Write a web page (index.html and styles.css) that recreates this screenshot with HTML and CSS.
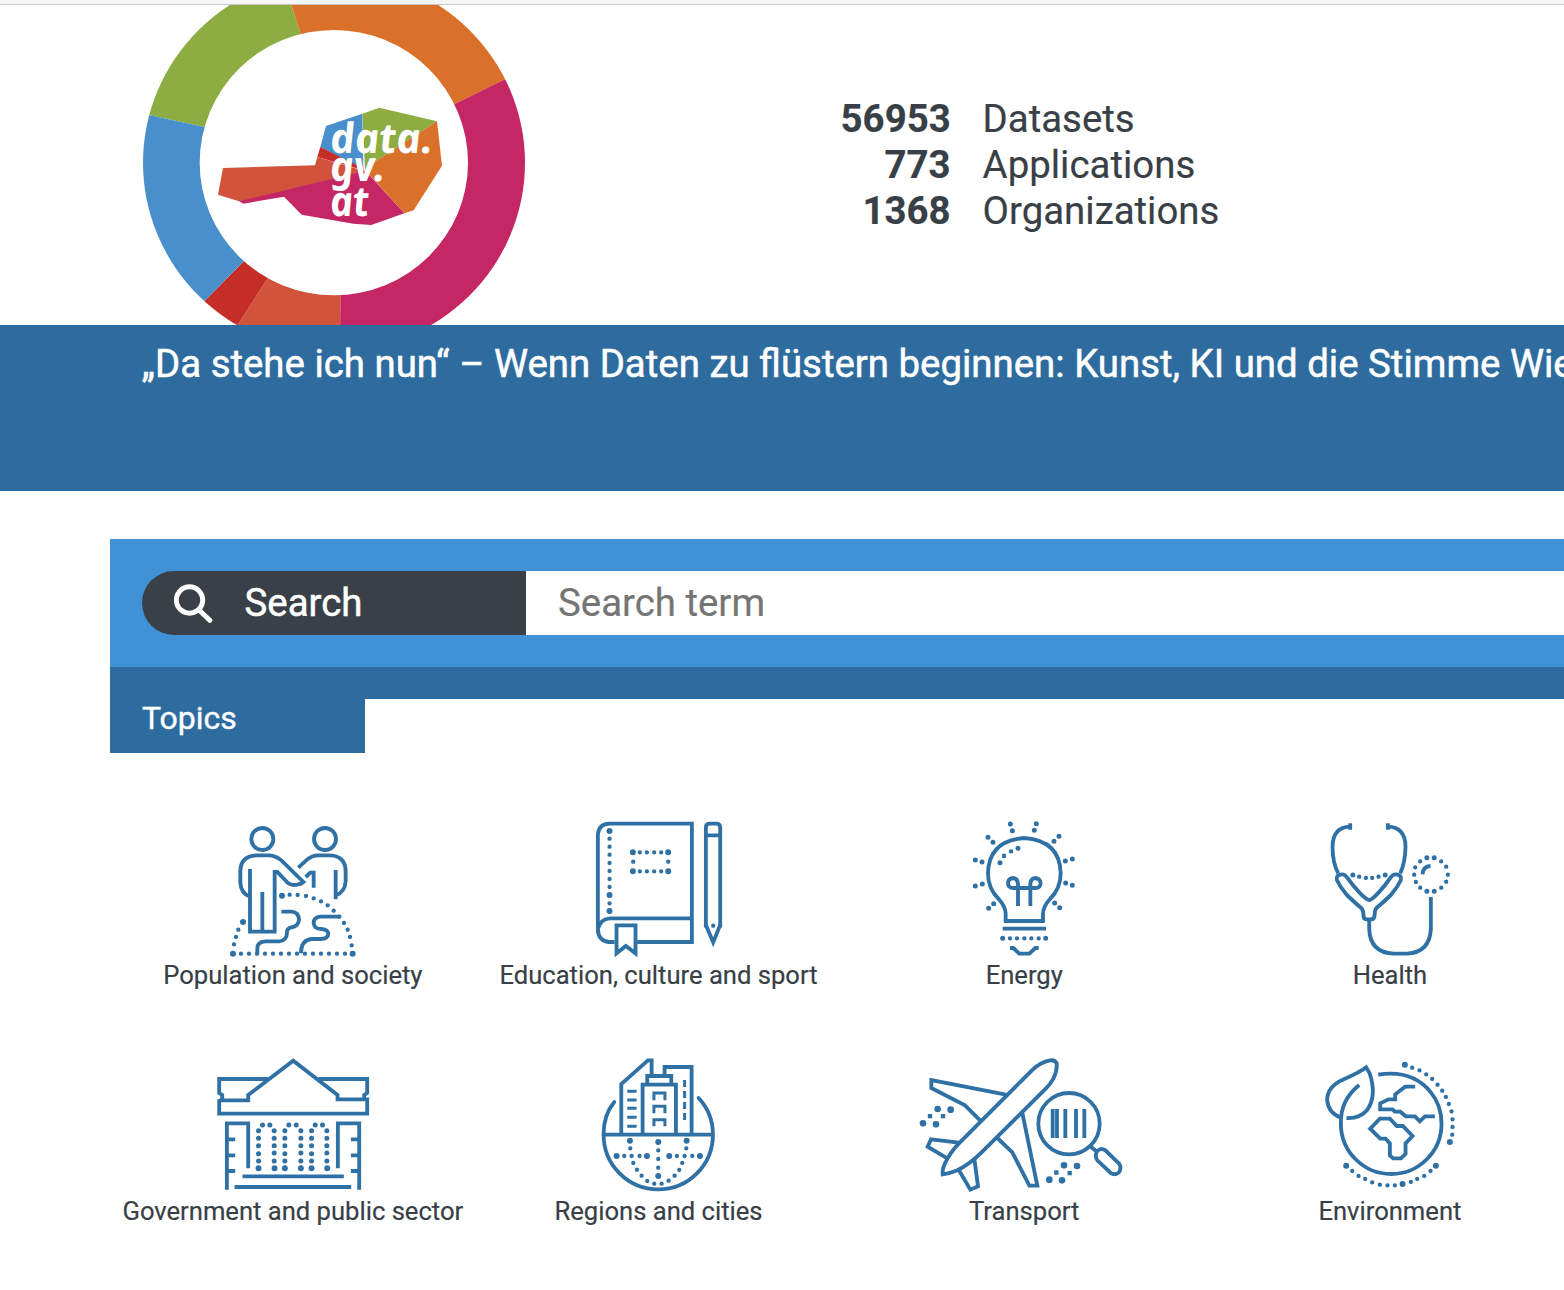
FILE: index.html
```html
<!DOCTYPE html>
<html lang="en">
<head>
<meta charset="utf-8">
<title>data.gv.at</title>
<link rel="stylesheet" href="styles.css">
</head>
<body>
<div class="topline"></div>
<header class="header">
  <svg class="logo" viewBox="39 15 1152 960" role="img" aria-label="data.gv.at">
    <clipPath id="ring"><ellipse cx="612" cy="488.4" rx="573" ry="565"/></clipPath>
    <g clip-path="url(#ring)">
      <path fill="#8dad42" d="M612 488 512 102 443 -115H-100V311L223 381Z"/>
      <path fill="#da712b" d="M612 488 512 102 443 -115H1300V151L972 313Z"/>
      <path fill="#c42764" d="M612 488 972 313 1300 151V1200H629L631 885Z"/>
      <path fill="#d1533c" d="M612 488 631 885 629 1200H178L413 835Z"/>
      <path fill="#c52d27" d="M612 488 413 835 178 1200H-68L341 784Z"/>
      <path fill="#488fcc" d="M612 488 341 784 -68 1200H-200V289L223 381Z"/>
    </g>
    <ellipse cx="611.5" cy="488" rx="402.5" ry="398" fill="#fff"/>
    <path fill="#488fcc" d="M697 341 588 378 571 441 700 508Z"/>
    <path fill="#8dad42" d="M697 341 748 323 921 364 735 485 705 510Z"/>
    <path fill="#da712b" d="M921 364 936 497 851 631 823 640 705 510 735 485Z"/>
    <path fill="#c52d27" d="M571 441 562 471 705 512 690 500Z"/>
    <path fill="#d1533c" d="M562 471 555 496 279 504 264 584 332 605 706 514Z"/>
    <path fill="#c42764" d="M706 512 823 640 724 675 670 671 515 644 462 590 340 611 328 604Z"/>
    <g class="logo-text">
      <text transform="translate(604 460) skewX(6)" textLength="308" lengthAdjust="spacingAndGlyphs">data.</text>
      <text transform="translate(604 543) skewX(6)" textLength="164" lengthAdjust="spacingAndGlyphs">gv.</text>
      <text transform="translate(604 649) skewX(6)" textLength="117" lengthAdjust="spacingAndGlyphs">at</text>
    </g>
  </svg>
  <dl class="stats">
    <dt>56953</dt><dd>Datasets</dd>
    <dt>773</dt><dd>Applications</dd>
    <dt>1368</dt><dd>Organizations</dd>
  </dl>
</header>
<section class="banner">„Da stehe ich nun“ – Wenn Daten zu flüstern beginnen: Kunst, KI und die Stimme Wiens</section>
<main class="main">
  <form class="search">
    <button class="search-button" type="button">
      <svg class="search-icon" viewBox="0 0 39 39"><circle cx="15.5" cy="16" r="13.2"/><path d="M25 26 35.8 36.3"/></svg>
      Search
    </button>
    <input class="search-input" type="text" placeholder="Search term">
  </form>
  <div class="strip"></div>
  <h2 class="tab">Topics</h2>
  <div class="topics">
    <a class="topic">
      <svg viewBox="-81 0 660 435">
        <circle cx="157" cy="72" r="33"/><circle cx="345" cy="72" r="33"/>
        <path d="M120 162V350H194V171H202L234 204Q248 215 273 206L280 201 215 137Q197 121 175 121H140Q91 123 91 170V203Q93 236 120 245M157 231V350"/>
        <path d="M265 158 291 134Q306 121 324 121H360Q407 123 407 170V198Q405 232 377 241M377 165V253M287 186 301 173H311V218"/>
        <path d="M214 290H245Q266 292 267 314 266 334 244 337 229 340 231 354 230 377 208 379H166Q142 380 142 400V415M389 305H331Q311 307 311 324 312 342 334 342 354 344 355 356 354 372 332 372H305Q273 375 273 415"/>
        <path class="dot small" d="M85 344h0M78 366h0M72 388h0M93 416h0M117 416h0M141 416h0M165 416h0M189 416h0M213 416h0M237 416h0M261 416h0M285 416h0M309 416h0M333 416h0M357 416h0M381 416h0M405 416h0M425 391h0M420 366h0M413 344h0M402 324h0M388 305h0M371 287h0M353 271h0M333 259h0M311 250h0M288 243h0M263 240h0M239 239h0"/>
        <path class="dot big" d="M99 321h0M69 416h0M428 416h0M216 242h0"/>
      </svg>
      <span>Population and society</span>
    </a>
    <a class="topic">
      <svg viewBox="-92.6 15 660 435">
        <path d="M104 396H87Q55 392 54 358V75Q56 42 88 41H336V396H172M54 358Q62 326 90 325H336"/>
        <path d="M110 346H167V430L138 408 110 430Z"/>
        <path d="M378 345V53Q378 41 390 41H409Q421 41 421 53V345L400 397ZM378 76H421"/>
        <path class="dot small" d="M89 86h0M89 110h0M89 134h0M89 159h0M89 183h0M89 207h0M89 231h0M89 280h0M180 127h0M201 127h0M223 127h0M244 127h0M180 184h0M201 184h0M223 184h0M244 184h0M160 155h0M265 155h0M378 347h0M400 347h0M421 347h0"/>
        <path class="dot big" d="M89 63h0M89 255h0M89 303h0M159 127h0M265 127h0M159 184h0M265 184h0"/>
      </svg>
      <span>Education, culture and sport</span>
    </a>
    <a class="topic">
      <svg viewBox="-138 15 660 435">
        <path d="M137 333V312Q137 290 116 267 84 236 84 190 86 92 193 84 300 92 302 190 302 236 270 267 249 290 249 312V333ZM128 356H258M150 414H160L178 431H208L226 414H236"/>
        <path d="M174 288V222Q173 205 159 204 144 206 144 220 145 234 160 234H226Q241 234 242 220 241 206 226 204 212 205 211 222V288"/>
        <path class="dot" d="M151 42h0M157 62h0M229 41h0M223 61h0M84 82h0M99 97h0M297 79h0M282 94h0M46 150h0M66 156h0M337 147h0M316 153h0M46 228h0M67 222h0M317 219h0M337 226h0M101 281h0M86 295h0M284 279h0M299 293h0M174 115h0M120 158h0M128 385h0M257 385h0"/>
        <path class="dot small" d="M150 385h0M171 385h0M193 385h0M214 385h0M236 385h0"/>
        <path d="M147 124H159M132 131V144"/>
      </svg>
      <span>Energy</span>
    </a>
    <a class="topic">
      <svg viewBox="-90.6 15 660 435">
        <path d="M120 50Q68 51 67 110 67 158 84 190M233 50Q285 51 286 110 285 158 270 190M120 40V59M233 40V59"/>
        <path d="M177 270Q184 270 203 250 226 226 241 203 248 192 258 193 275 195 272 210 262 232 242 255 218 278 198 295 193 302 193 318 191 328 183 328H169Q160 327 160 318 160 302 154 295 134 278 110 255 90 232 80 210 77 195 94 193 104 192 111 203 127 226 150 250 170 270 177 270Z"/>
        <path d="M177 330V356Q179 428 250 431H290Q359 428 362 356V261M337 193Q338 169 361 168"/>
        <path class="dot small" d="M147 200h0M167 204h0M186 204h0M205 200h0M393 154h0M408 170h0M413 194h0M408 215h0M393 233h0M330 233h0M317 216h0M312 194h0M315 172h0M330 154h0"/>
        <path class="dot" d="M128 195h0M225 195h0M350 143h0M372 143h0M372 244h0M350 244h0"/>
      </svg>
      <span>Health</span>
    </a>
    <a class="topic">
      <svg viewBox="-66.6 3 660 435">
        <path d="M188 87H42V129L51 135V148M42 148V191H486V148H397V135L264 32 129 135V151H42M340 87H486V129L477 135V148"/>
        <path d="M65 419V220H129V355M65 268H90M65 316H90M65 363H90M462 419V220H398V355M462 268H437M462 316H437M462 363H437M112 379H416M88 411H438"/>
        <path class="dot" d="M172 225h0M194 225h0M160 242h0M207 242h0M160 265h0M207 265h0M160 287h0M207 287h0M160 311h0M207 309h0M160 333h0M207 333h0M251 225h0M273 225h0M239 242h0M287 242h0M239 265h0M287 265h0M239 287h0M287 287h0M239 311h0M287 309h0M239 333h0M287 333h0M330 225h0M352 225h0M319 242h0M365 242h0M319 265h0M365 265h0M319 287h0M365 287h0M319 311h0M365 309h0M319 333h0M365 333h0"/>
        <path class="dot big" d="M160 355h0M208 355h0M239 355h0M287 355h0M319 355h0M366 355h0"/>
      </svg>
      <span>Government and public sector</span>
    </a>
    <a class="topic">
      <svg viewBox="-122.8 3 660 435">
        <path d="M73 156Q40 196 41 254A164 164 0 0 0 369 254Q369 190 326 144M41 254H369" stroke-linecap="round"/>
        <path d="M94 254V102L174 31H185V76M224 72V51H305V254M158 254V104H258V254M172 104V78H244V104"/>
        <path class="thin" d="M112 124H140M112 150H140M112 175H140M112 202H140M112 229H140M284 90V111M284 123V144M284 156V177M284 189V210M192 151V129H225V151M192 190V169H225V190M192 229V209H225V229"/>
        <path class="dot small" d="M121 295h0M125 318h0M130 339h0M141 359h0M155 377h0M172 393h0M193 401h0M215 401h0M236 392h0M254 377h0M268 360h0M277 339h0M284 318h0M289 295h0M205 301h0M205 327h0M205 353h0M103 318h0M149 318h0M261 318h0M307 318h0"/>
        <path class="dot big" d="M120 272h0M290 272h0M205 276h0M80 318h0M171 318h0M238 318h0M330 318h0M205 378h0"/>
      </svg>
      <span>Regions and cities</span>
    </a>
    <a class="topic">
      <svg viewBox="12 3 660 435">
        <path d="M98 373Q96 360 104 342 120 307 149 278L368 59Q392 36 420 31 435 29 440 40 442 62 430 86 421 103 408 115L217 305Q179 343 142 361 119 371 98 373Z"/>
        <path d="M288 134 64 90V114L165 166 211 212M336 184 382 407H358L307 307 259 261M146 278 63 268 53 290 112 325M193 326 204 409 181 419 147 361"/>
        <circle cx="477" cy="221" r="92"/>
        <path d="M540 288 558 303M562 303Q573 292 586 301L628 342Q635 354 627 367 616 377 602 369L562 331Q553 317 562 303Z"/>
        <path d="M428 177V264M441 177V264M466 177V264M498 177V264M523 177V264"/>
        <path class="square" d="M60 192V205M99 192V205M439 361V374M479 363V376"/>
        <path class="dot huge" d="M83 177h0M122 179h0M39 220h0M78 223h0M462 346h0M501 348h0M418 389h0M456 391h0"/>
      </svg>
      <span>Transport</span>
    </a>
    <a class="topic">
      <svg viewBox="-90.6 3 660 435">
        <path d="M204 74Q306 58 362 127 394 166 394 221A151 151 0 0 1 92 221Q90 151 147 105M109 204Q149 206 171 180 201 137 178 69L168 52Q151 66 101 88 50 110 51 151 54 188 92 203"/>
        <path d="M315 110H285L255 133V148H235L210 160V178H247L254 185H270L287 199H314L329 214 344 199H374M209 206H239L260 228H278L307 258 286 280V312L272 325H249L239 316V280L226 266H210L180 236Z"/>
        <path class="dot small" d="M306 53h0M328 61h0M348 73h0M366 87h0M382 104h0M396 122h0M407 141h0M416 162h0M424 184h0M427 208h0M427 231h0M426 254h0M126 363h0M145 378h0M165 387h0M186 397h0M209 404h0M232 406h0M254 406h0M302 396h0M321 387h0M342 378h0M361 363h0"/>
        <path class="dot big" d="M284 44h0M419 276h0M108 347h0M377 347h0M277 402h0"/>
      </svg>
      <span>Environment</span>
    </a>
  </div>
</main>
</body>
</html>
```
FILE: styles.css
```css
* { box-sizing: border-box; }
html { overflow: hidden; }
body {
  margin: 0;
  height: 1290px;
  overflow: hidden;
  background: #fff;
  color: #383f46;
  font-family: Roboto, sans-serif;
  font-size: 38.4px;
  line-height: 46px;
  -webkit-text-stroke: 0.2px;
}
.topline { height: 5px; background: #f7f7f9; border-bottom: 1px solid #c9c9cc; }
.header { display: flex; height: 320px; padding-left: 143px; }
.logo { width: 384px; height: 320px; flex: none; }
.logo-text {
  fill: #fff;
  stroke-linejoin: round;
  font: italic 700 125px "Noto Sans", sans-serif;
  -webkit-text-stroke: 5px #fff;
}
.stats {
  display: grid;
  grid-template-columns: 110px auto;
  column-gap: 32px;
  align-content: start;
  margin: 91px 0 0 313.6px;
}
.stats dt { font-weight: 700; text-align: right; }
.stats dd { margin: 0; }
.banner {
  height: 166px;
  padding: 16px 0 0 141.8px;
  overflow: hidden;
  white-space: nowrap;
  background: #2e6c9f;
  color: #fff;
  -webkit-text-stroke: 0.5px;
}
.main { padding: 48px 0 0 110px; }
.search { display: flex; height: 128px; padding: 32px 0 32px 32px; background: #4191d6; }
.search-button {
  display: flex;
  align-items: center;
  gap: 31.5px;
  width: 384px;
  padding: 0 0 0 32px;
  border: 0;
  border-radius: 32px 0 0 32px;
  background: #3a4047;
  color: #fff;
  font: inherit;
  -webkit-text-stroke: 0.5px;
}
.search-icon { width: 39px; height: 39px; fill: none; stroke: #fff; stroke-width: 5; stroke-linecap: round; }
.search-input { flex: 1; padding: 0 32px; border: 0; border-radius: 0; background: #fff; font: inherit; }
.search-input::placeholder { color: #757575; }
.strip { height: 32px; background: #2e6c9f; }
.tab {
  width: 255px;
  height: 54px;
  margin: 0;
  padding-left: 32px;
  background: #2e6c9f;
  color: #fff;
  font-size: 32px;
  font-weight: 400;
  line-height: 38px;
  -webkit-text-stroke: 0.4px;
}
.topics {
  display: grid;
  grid-template-columns: repeat(4, 365.7px);
  grid-auto-rows: 236px;
  padding-top: 62px;
}
.topic {
  display: flex;
  flex-direction: column;
  align-items: center;
  font-size: 25.6px;
  line-height: 31px;
  white-space: nowrap;
}
.topic svg {
  width: 220px;
  height: 145px;
  fill: none;
  stroke: #2f70a5;
  stroke-width: 11.5;
}
.topic .thin { stroke-width: 9; }
.topic .square { stroke-width: 13; }
.topic .dot { stroke-width: 15; stroke-linecap: round; }
.topic .small { stroke-width: 13; }
.topic .big { stroke-width: 18; }
.topic .huge { stroke-width: 20; }
```
